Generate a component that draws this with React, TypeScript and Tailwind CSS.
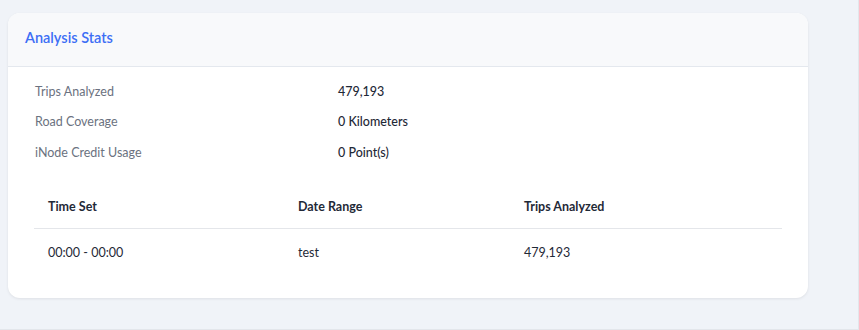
const stats = [
  { label: 'Trips Analyzed', value: '479,193' },
  { label: 'Road Coverage', value: '0 Kilometers' },
  { label: 'iNode Credit Usage', value: '0 Point(s)' },
]

const rows = [{ time: '00:00 - 00:00', range: 'test', trips: '479,193' }]

export default function App() {
  return (
    <div className="h-[330px] w-[859px] bg-[#f0f3f8] border-r border-b border-[#e3e6eb] pl-2 pt-[13px] font-['Lato',sans-serif]">
      <div className="w-[800px] rounded-xl bg-white shadow-[0_1px_3px_rgba(0,0,0,0.08)] overflow-hidden">
        <div className="h-[54px] flex items-center pb-1 px-[17px] bg-[#f8f9fb] border-b border-[#e4e8ee]">
          <h2 className="text-[14.5px] font-semibold text-[#3d6ef5]">Analysis Stats</h2>
        </div>
        <div className="px-[26px] pt-[15px] pb-[26px]">
          <div className="flex flex-col gap-[10.5px]">
            {stats.map((s) => (
              <div key={s.label} className="flex h-5 items-center text-[12.5px]">
                <span className="w-[304px] pl-px text-[#6b7280]">{s.label}</span>
                <span className="font-medium text-[#1f2937]">{s.value}</span>
              </div>
            ))}
          </div>
          <table className="mt-[18px] w-full text-[12.5px] text-left">
            <thead>
              <tr className="h-[47px] border-b border-[#e4e6ea]">
                <th className="w-[250px] pl-[14px] pt-[6px] font-bold text-[#1f2937]">Time Set</th>
                <th className="w-[226px] pl-[14px] pt-[6px] font-bold text-[#1f2937]">Date Range</th>
                <th className="pl-[14px] pt-[6px] font-bold text-[#1f2937]">Trips Analyzed</th>
              </tr>
            </thead>
            <tbody>
              {rows.map((r) => (
                <tr key={r.time} className="h-[44px] text-[#1f2937]">
                  <td className="pl-[14px] pt-[6px]">{r.time}</td>
                  <td className="pl-[14px] pt-[6px]">{r.range}</td>
                  <td className="pl-[14px] pt-[6px]">{r.trips}</td>
                </tr>
              ))}
            </tbody>
          </table>
        </div>
      </div>
    </div>
  )
}
